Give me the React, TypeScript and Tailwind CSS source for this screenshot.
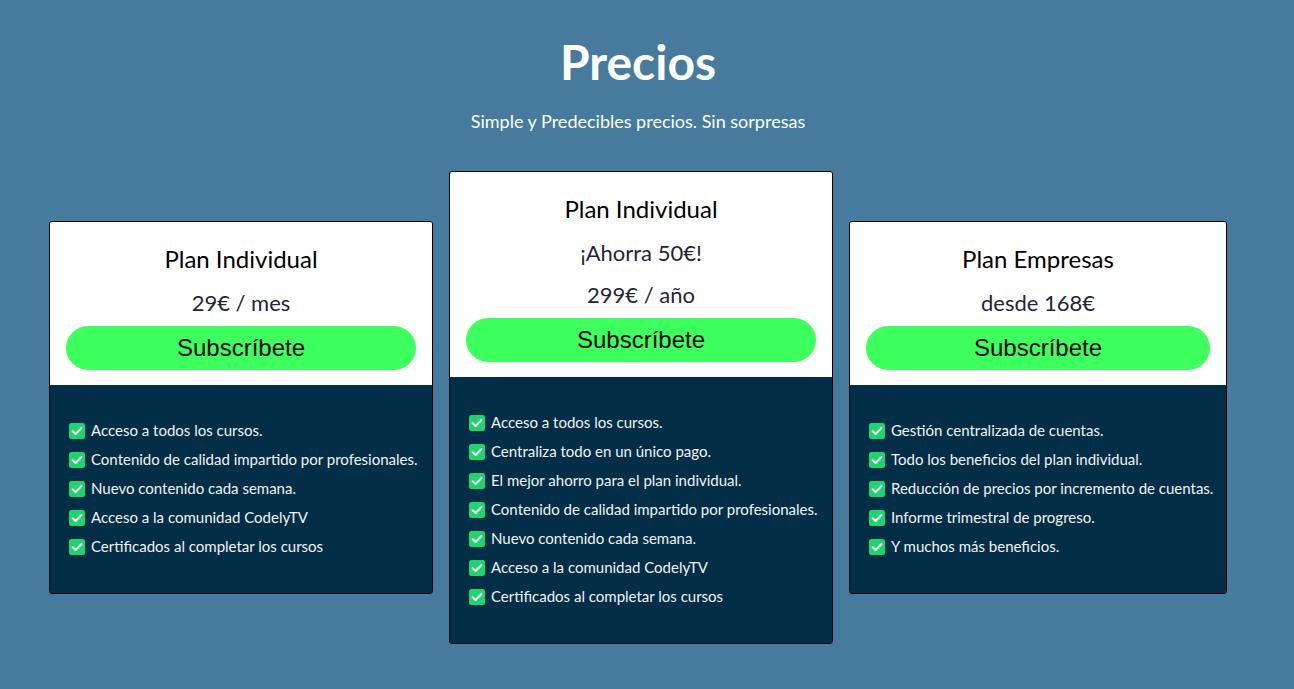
const plans = [
  {
    title: "Plan Individual",
    prices: ["29€ / mes"],
    width: "w-[384px]",
    features: [
      "Acceso a todos los cursos.",
      "Contenido de calidad impartido por profesionales.",
      "Nuevo contenido cada semana.",
      "Acceso a la comunidad CodelyTV",
      "Certificados al completar los cursos",
    ],
  },
  {
    title: "Plan Individual",
    prices: ["¡Ahorra 50€!", "299€ / año"],
    width: "w-[384px]",
    features: [
      "Acceso a todos los cursos.",
      "Centraliza todo en un único pago.",
      "El mejor ahorro para el plan individual.",
      "Contenido de calidad impartido por profesionales.",
      "Nuevo contenido cada semana.",
      "Acceso a la comunidad CodelyTV",
      "Certificados al completar los cursos",
    ],
  },
  {
    title: "Plan Empresas",
    prices: ["desde 168€"],
    width: "w-[378px]",
    features: [
      "Gestión centralizada de cuentas.",
      "Todo los beneficios del plan individual.",
      "Reducción de precios por incremento de cuentas.",
      "Informe trimestral de progreso.",
      "Y muchos más beneficios.",
    ],
  },
];

function Check() {
  return (
    <svg width="16" height="16" viewBox="0 0 16 16" className="shrink-0">
      <rect x="0" y="0" width="16" height="16" rx="2.5" fill="#1ed46c" />
      <path d="M3.6 8.2 L6.6 11 L12.4 5" fill="none" stroke="#fff" strokeWidth="2" strokeLinecap="round" strokeLinejoin="round" />
    </svg>
  );
}

function PlanCard({ plan }: { plan: (typeof plans)[number] }) {
  return (
    <div className={`${plan.width} border border-black rounded-[3px] overflow-hidden`}>
      {/* header */}
      <div className="bg-white px-4 pt-[23px] pb-[15px] flex flex-col items-center">
        <h3 className="text-[24px] leading-[28px] text-black">{plan.title}</h3>
        <div className="mt-[16px] flex flex-col gap-[14px]">
          {plan.prices.map((p) => (
            <p key={p} className="text-[22px] leading-[28px] text-[#24243a] text-center">{p}</p>
          ))}
        </div>
        <button className="mt-[9px] w-full h-[44px] rounded-full bg-[#3dff5d] text-[24px] text-black font-['Liberation_Sans',Arial,sans-serif]">
          Subscríbete
        </button>
      </div>

      {/* features */}
      <ul className="bg-[#022f47] pl-[19px] pr-3 pt-[31px] pb-[32px]">
        {plan.features.map((f) => (
          <li key={f} className="h-[29px] flex items-center gap-[6px] text-[15px] text-[#f2f2f2]">
            <Check />
            <span>{f}</span>
          </li>
        ))}
      </ul>
    </div>
  );
}

export default function App() {
  return (
    <div className="min-h-[689px] bg-[#467b9d] font-['Lato',sans-serif]">
      <div className="w-[1276px] flex flex-col items-center">
        <h1 className="mt-[34px] text-[48px] leading-[56px] font-bold text-white">Precios</h1>
        <p className="mt-[19px] text-[18px] leading-[24px] text-white">Simple y Predecibles precios. Sin sorpresas</p>

        <div className="mt-[38px] flex items-center gap-4">
          {plans.map((plan, i) => (
            <PlanCard key={i} plan={plan} />
          ))}
        </div>
      </div>
    </div>
  );
}
